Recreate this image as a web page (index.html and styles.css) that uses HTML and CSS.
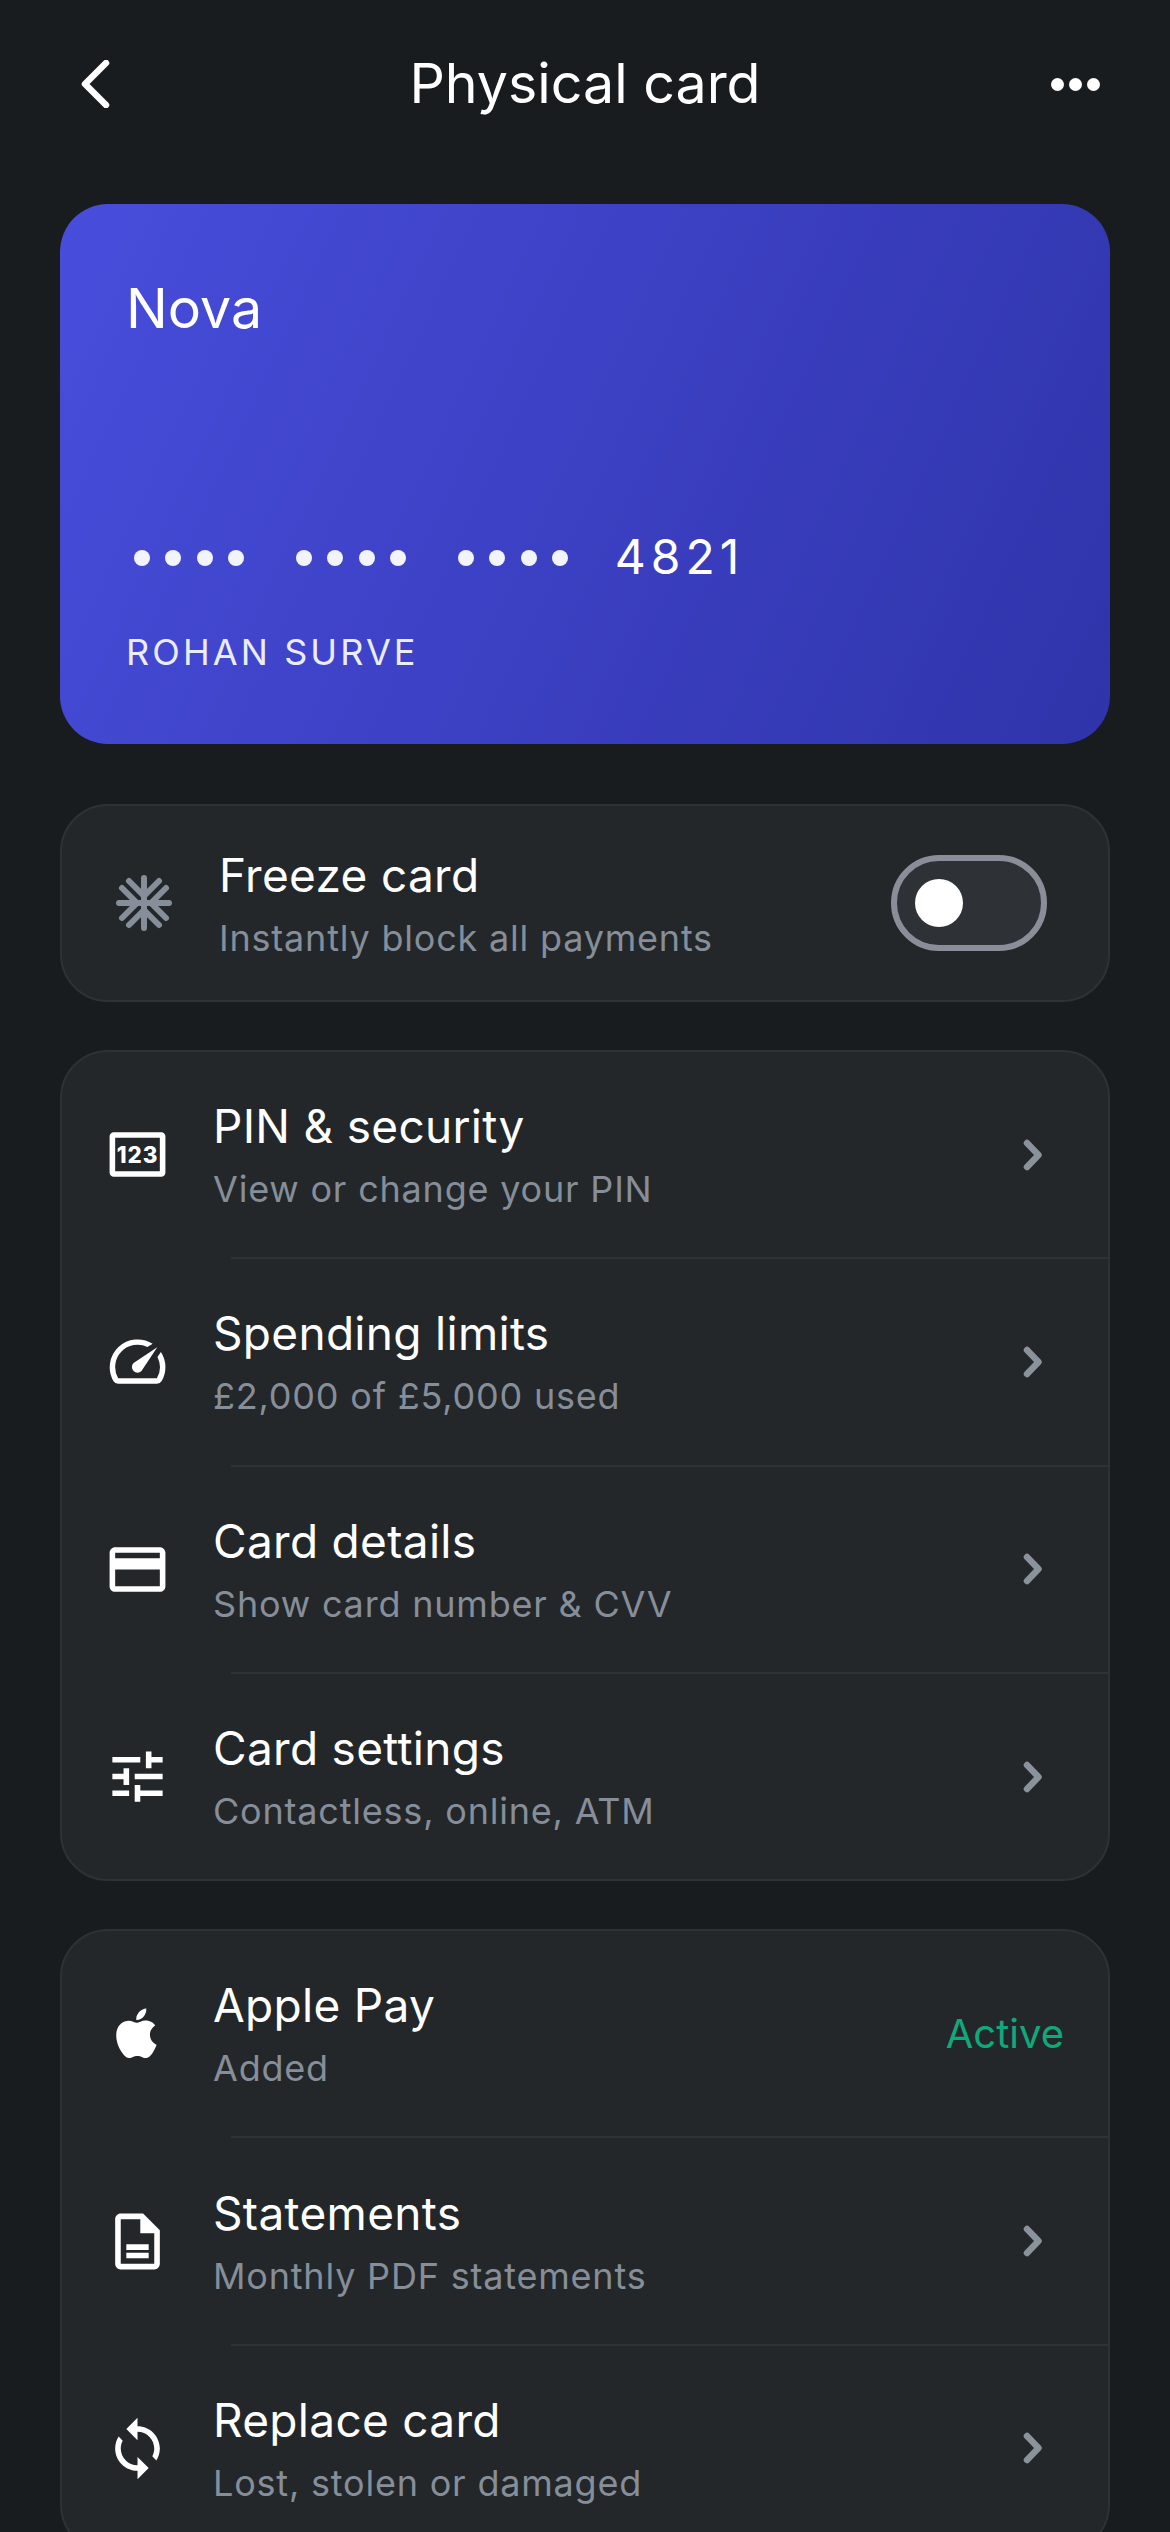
FILE: index.html
```html
<!DOCTYPE html>
<html lang="en">
<head>
<meta charset="utf-8">
<title>Physical card</title>
<link rel="stylesheet" href="styles.css">
</head>
<body>
<div class="screen">
  <header class="topbar">
    <svg class="back" viewBox="0 0 32 48"><path d="M28 3 7 24l21 21"/></svg>
    <h1 class="title">Physical card</h1>
    <div class="more"><i></i><i></i><i></i></div>
  </header>

  <section class="bank-card">
    <div class="brand">Nova</div>
    <div class="number">
      <span class="dots"><i></i><i></i><i></i><i></i></span>
      <span class="dots"><i></i><i></i><i></i><i></i></span>
      <span class="dots"><i></i><i></i><i></i><i></i></span>
      <span class="last">4821</span>
    </div>
    <div class="holder">ROHAN SURVE</div>
  </section>

  <section class="panel freeze">
    <svg class="flake" viewBox="0 0 56 56"><path d="M28 3v50M3 28h50M13 6l15 15 15-15M13 50l15-15 15 15M6 13l15 15L6 43M50 13 35 28l15 15"/></svg>
    <div class="text">
      <div class="name">Freeze card</div>
      <div class="sub">Instantly block all payments</div>
    </div>
    <div class="toggle"><span class="knob"></span></div>
  </section>

  <section class="panel list">
    <div class="row">
      <svg class="ico" viewBox="0 0 24 24"><path fill-rule="evenodd" d="M3.500 4h17A1.500 1.500 0 0 1 22 5.500v13a1.500 1.500 0 0 1-1.500 1.500h-17A1.500 1.500 0 0 1 2 18.500v-13A1.500 1.500 0 0 1 3.500 4zM4 6v12h16V6H4z"/><text class="pin" x="12" y="14.900">123</text></svg>
      <div class="text"><div class="name">PIN &amp; security</div><div class="sub">View or change your PIN</div></div>
      <svg class="chev" viewBox="0 0 20 32"><path d="M4 4l11.500 12L4 28"/></svg>
    </div>
    <div class="row">
      <svg class="ico" viewBox="0 0 24 24"><path d="M20.380 8.570l-1.230 1.850a8 8 0 0 1-.220 7.580H5.070A8 8 0 0 1 15.580 6.850l1.850-1.200A10 10 0 0 0 3.350 19a2 2 0 0 0 1.720 1h13.850a2 2 0 0 0 1.740-1 10 10 0 0 0-.270-10.440z"/><path d="M10.590 15.410a2 2 0 0 0 2.830 0l5.660-8.490-8.490 5.660a2 2 0 0 0 0 2.830z"/></svg>
      <div class="text"><div class="name">Spending limits</div><div class="sub">£2,000 of £5,000 used</div></div>
      <svg class="chev" viewBox="0 0 20 32"><path d="M4 4l11.500 12L4 28"/></svg>
    </div>
    <div class="row">
      <svg class="ico" viewBox="0 0 24 24"><path d="M20 4H4c-1.110 0-1.990.890-1.990 2L2 18c0 1.110.890 2 2 2h16c1.110 0 2-.890 2-2V6c0-1.110-.890-2-2-2zm0 14H4v-6h16v6zm0-10H4V6h16v2z"/></svg>
      <div class="text"><div class="name">Card details</div><div class="sub">Show card number &amp; CVV</div></div>
      <svg class="chev" viewBox="0 0 20 32"><path d="M4 4l11.500 12L4 28"/></svg>
    </div>
    <div class="row">
      <svg class="ico" viewBox="0 0 24 24"><path d="M3 17v2h6v-2H3zM3 5v2h10V5H3zm10 16v-2h8v-2h-8v-2h-2v6h2zM7 9v2H3v2h4v2h2V9H7zm14 4v-2H11v2h10zm-6-4h2V7h4V5h-4V3h-2v6z"/></svg>
      <div class="text"><div class="name">Card settings</div><div class="sub">Contactless, online, ATM</div></div>
      <svg class="chev" viewBox="0 0 20 32"><path d="M4 4l11.500 12L4 28"/></svg>
    </div>
  </section>

  <section class="panel list">
    <div class="row">
      <svg class="ico" viewBox="0 0 24 24"><path transform="translate(12 12) scale(.88) translate(-12 -12)" d="M17.050 12.540c-.030-2.550 2.080-3.770 2.170-3.830-1.180-1.730-3.020-1.970-3.680-2-1.570-.160-3.060.920-3.860.920-.790 0-2.020-.900-3.320-.870-1.710.020-3.290.990-4.170 2.530-1.780 3.080-.460 7.640 1.270 10.140.850 1.220 1.860 2.600 3.190 2.550 1.280-.050 1.760-.830 3.310-.830 1.540 0 1.980.830 3.330.800 1.380-.020 2.250-1.240 3.090-2.470.970-1.420 1.370-2.790 1.400-2.860-.030-.010-2.690-1.030-2.730-4.080zM14.510 5.050c.710-.860 1.180-2.040 1.050-3.230-1.020.040-2.250.680-2.980 1.530-.650.760-1.230 1.970-1.070 3.130 1.130.090 2.290-.580 3-1.430z"/></svg>
      <div class="text"><div class="name">Apple Pay</div><div class="sub">Added</div></div>
      <span class="status">Active</span>
    </div>
    <div class="row">
      <svg class="ico" viewBox="0 0 24 24"><path d="M14 2H6c-1.100 0-2 .900-2 2v16c0 1.100.890 2 1.990 2H18c1.100 0 2-.900 2-2V8l-6-6zm4 18H6V4h7v5h5v11zM8 13h8v2H8v-2zm0 3h8v2H8v-2z"/></svg>
      <div class="text"><div class="name">Statements</div><div class="sub">Monthly PDF statements</div></div>
      <svg class="chev" viewBox="0 0 20 32"><path d="M4 4l11.500 12L4 28"/></svg>
    </div>
    <div class="row">
      <svg class="ico" viewBox="0 0 24 24"><path d="M12 4V1L8 5l4 4V6c3.310 0 6 2.690 6 6 0 1.010-.250 1.970-.700 2.800l1.460 1.460C19.540 15.030 20 13.570 20 12c0-4.420-3.580-8-8-8zm0 14c-3.310 0-6-2.690-6-6 0-1.010.250-1.970.700-2.800L5.240 7.740C4.460 8.970 4 10.430 4 12c0 4.420 3.580 8 8 8v3l4-4-4-4v3z"/></svg>
      <div class="text"><div class="name">Replace card</div><div class="sub">Lost, stolen or damaged</div></div>
      <svg class="chev" viewBox="0 0 20 32"><path d="M4 4l11.500 12L4 28"/></svg>
    </div>
  </section>
</div>
</body>
</html>
```

FILE: styles.css
```css
* { box-sizing: border-box; }
html, body { margin: 0; padding: 0; background: #191c1f; }
body { font-family: Inter, "Liberation Sans", sans-serif; color: #fff; }
.screen { width: 1170px; height: 2532px; overflow: hidden; padding: 0 60px; display: flex; flex-direction: column; }

.topbar { height: 204px; flex: none; display: flex; align-items: center; justify-content: space-between; padding: 0 10px 36px 18px; position: relative; }
.back { width: 32px; height: 48px; fill: none; stroke: #fff; stroke-width: 6.500; stroke-linecap: round; stroke-linejoin: round; }
.title { position: absolute; left: 0; right: 0; top: 51px; margin: 0; text-align: center; font-size: 55.500px; line-height: 64px; font-weight: 400; }
.more { display: flex; gap: 5px; }
.more i { width: 13px; height: 13px; border-radius: 50%; background: #fff; }

.bank-card { height: 540px; flex: none; border-radius: 48px; padding: 72px 66px 0; background: linear-gradient(115deg, #484edc 0%, #3d41c5 45%, #2f34aa 100%); }
.brand { font-size: 55.500px; line-height: 64px; }
.number { display: flex; align-items: center; gap: 51.600px; margin-top: 186px; height: 60px; padding-left: 7.500px; }
.dots { display: flex; gap: 15.500px; margin-top: 4px; }
.dots i { width: 16px; height: 16px; border-radius: 50%; background: #f2f3fb; }
.last { font-size: 48px; letter-spacing: 5px; margin-left: -5px; }
.holder { margin-top: 44px; font-size: 36px; line-height: 44px; letter-spacing: 3.100px; color: #ebecf9; }

.panel { flex: none; background: #23272a; border: 2px solid #2e3236; border-radius: 48px; }
.freeze { margin-top: 60px; height: 198px; display: flex; align-items: center; padding: 0 61px 0 54px; }
.flake { width: 56px; height: 56px; flex: none; margin-right: 47px; fill: none; stroke: #868e99; stroke-width: 6; stroke-linecap: round; stroke-linejoin: round; }
.text { flex: 1; min-width: 0; }
.name { font-size: 46px; line-height: 56px; letter-spacing: 0.300px; color: #fff; }
.sub { font-size: 36px; line-height: 44px; margin-top: 13px; letter-spacing: 0.800px; color: #868e99; }
.toggle { width: 156px; height: 96px; flex: none; border: 6px solid #8a8e98; border-radius: 48px; background: #2e3236; display: flex; align-items: center; padding-left: 18px; }
.knob { width: 48px; height: 48px; border-radius: 50%; background: #fff; }

.list { margin-top: 48px; padding: 0; }
.row { height: 205.300px; flex: none; display: flex; align-items: center; padding: 0 65px 0 42px; position: relative; }
.row + .row { margin-top: 2px; }
.row + .row::before { content: ""; position: absolute; left: 169px; right: 0; top: -2px; height: 2px; background: #2e3236; }
.ico { width: 67px; height: 67px; flex: none; fill: #fff; margin-right: 42px; }
.pin { font-family: Inter, sans-serif; font-size: 8px; font-weight: 800; letter-spacing: 0.300px; text-anchor: middle; fill: #fff; }
.chev { width: 20px; height: 32px; flex: none; fill: none; stroke: #8a929c; stroke-width: 6.500; stroke-linecap: round; stroke-linejoin: round; }
.status { font-size: 40px; color: #10a97b; margin-right: -21px; }
```
